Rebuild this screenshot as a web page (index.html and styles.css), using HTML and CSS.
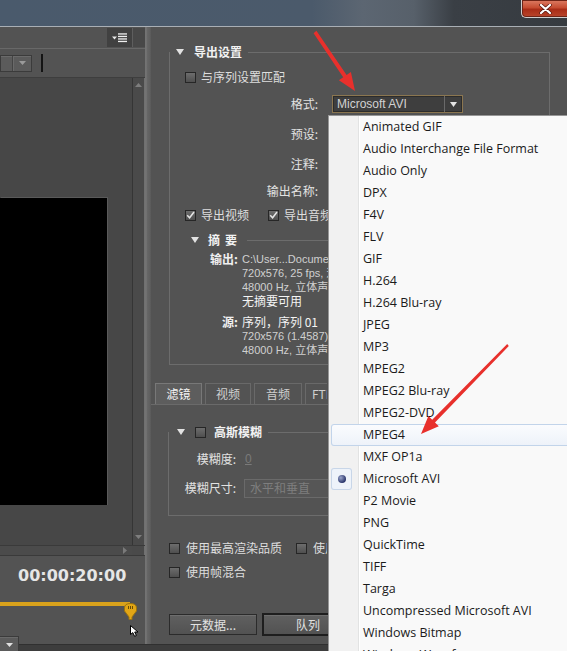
FILE: index.html
```html
<!DOCTYPE html>
<html lang="zh-CN">
<head>
<meta charset="utf-8">
<title>导出设置</title>
<link rel="stylesheet" href="styles.css">
</head>
<body>
<div class="titlebar">
  <div class="close">
    <svg width="13" height="10" viewBox="0 0 13 10"><path d="M2 1L11 9M11 1L2 9" stroke="#5a1a10" stroke-width="3.6" stroke-linecap="round"/><path d="M2 1L11 9M11 1L2 9" stroke="#fff" stroke-width="2.2" stroke-linecap="round"/></svg>
  </div>
</div>

<div class="window">
  <div class="left">
    <div class="lp-head">
      <div class="menu-btn">
        <span class="menu-ico">
          <svg width="16" height="10" viewBox="0 0 16 10"><path d="M0 3.5H5L2.5 6.5Z" fill="#e8e8e8"/><rect x="6" y="0.3" width="9" height="1.3" fill="#f0f0f0"/><rect x="6" y="2.8" width="9" height="1.3" fill="#f0f0f0"/><rect x="6" y="5.3" width="9" height="1.3" fill="#f0f0f0"/><rect x="6" y="7.8" width="9" height="1.3" fill="#f0f0f0"/></svg>
        </span>
        <span class="menu-side"></span>
      </div>
    </div>
    <div class="lp-tool">
      <div class="sel">
        <span class="sel-txt"></span>
        <span class="sel-arr"><svg width="7" height="4" viewBox="0 0 7 4"><path d="M0 0H7L3.5 4Z" fill="#9a9a9a"/></svg></span>
      </div>
      <span class="vbar"></span>
    </div>
    <div class="lp-view">
      <div class="monitor"><div class="video"></div></div>
      <div class="vscroll">
        <svg width="7" height="4" viewBox="0 0 7 4"><path d="M0 4H7L3.5 0Z" fill="#7e7e7e"/></svg>
        <svg width="7" height="4" viewBox="0 0 7 4"><path d="M0 0H7L3.5 4Z" fill="#7e7e7e"/></svg>
      </div>
    </div>
    <div class="hscroll">
      <div class="hs-track"><svg width="4" height="7" viewBox="0 0 4 7"><path d="M0 0V7L4 3.5Z" fill="#7a7a7a"/></svg></div>
      <div class="corner"></div>
    </div>
    <div class="lp-time">
      <div class="timecode">00:00:20:00</div>
      <div class="track">
        <div class="bar"></div>
        <svg class="playhead" width="13" height="17" viewBox="0 0 13 17"><path d="M0.5 5Q0.5 0.5 6.5 0.5Q12.5 0.5 12.5 5V8L8 14V16.5H5V14L0.5 8Z" fill="#e2a615" stroke="#9c7410"/><path d="M4.5 3v3M6.5 3v3M8.5 3v3" stroke="#6b4c05"/></svg>
        <svg class="cursor" width="10" height="12" viewBox="0 0 10 12"><path d="M0.5 0.5V9.5L2.8 7.6L4.6 11.3L6.4 10.5L4.7 7H8Z" fill="#fff" stroke="#000"/></svg>
      </div>
      <div class="sel small">
        <span class="sel-arr"><svg width="7" height="4" viewBox="0 0 7 4"><path d="M0 0H7L3.5 4Z" fill="#e0e0e0"/></svg></span>
      </div>
    </div>
  </div>

  <div class="divider"></div>

  <div class="right">
    <div class="settings">
      <div class="group g1">
        <div class="g-head"><span class="tri"></span><span class="g-title">导出设置</span><span class="g-line"></span></div>
        <div class="row r-match"><span class="cb"></span><span class="cb-label">与序列设置匹配</span></div>
        <div class="frow r-format">
          <span class="flabel">格式:</span>
          <div class="fsel"><span class="fsel-txt">Microsoft AVI</span><span class="fsel-arr"><svg width="7" height="5" viewBox="0 0 7 5"><path d="M0 0H7L3.5 5Z" fill="#e4e4e4"/></svg></span></div>
        </div>
        <div class="frow r-preset"><span class="flabel">预设:</span></div>
        <div class="frow r-note"><span class="flabel">注释:</span></div>
        <div class="frow r-name"><span class="flabel">输出名称:</span></div>
        <div class="row r-checks">
          <span class="cb on"><svg width="9" height="9" viewBox="0 0 9 9"><path d="M1.2 4.2L3.6 6.8L8 1" fill="none" stroke="#e6e6e6" stroke-width="1.5"/></svg></span><span class="cb-label">导出视频</span>
          <span class="cb on cb2"><svg width="9" height="9" viewBox="0 0 9 9"><path d="M1.2 4.2L3.6 6.8L8 1" fill="none" stroke="#e6e6e6" stroke-width="1.5"/></svg></span><span class="cb-label clip">导出音频</span>
        </div>
        <div class="sub-head"><span class="tri"></span><span class="s-title">摘要</span><span class="g-line s-line"></span></div>
        <div class="summary">
          <span class="sl">输出:</span><span class="sv">C:\User...Documents\序列 01.avi</span>
          <span></span><span class="sv">720x576, 25 fps, 逐行, 00:00:20:00</span>
          <span></span><span class="sv">48000 Hz, 立体声, 16 位</span>
          <span></span><span class="sv w">无摘要可用</span>
          <span class="gap"></span>
          <span class="sl">源:</span><span class="sv w">序列，序列 01</span>
          <span></span><span class="sv">720x576 (1.4587), 25 fps, 逐行</span>
          <span></span><span class="sv">48000 Hz, 立体声</span>
        </div>
      </div>
    </div>

    <div class="tabs">
      <span class="tab act t1">滤镜</span>
      <span class="tab t2">视频</span>
      <span class="tab t3">音频</span>
      <span class="tab t4">FTP</span>
    </div>
    <div class="tab-body">
      <div class="group g2">
        <div class="g-head"><span class="tri"></span><span class="cb"></span><span class="g-title">高斯模糊</span><span class="g-line"></span></div>
        <div class="brow r-blur"><span class="flabel">模糊度:</span><span class="zero">0</span></div>
        <div class="brow r-size"><span class="flabel">模糊尺寸:</span><span class="bsel">水平和垂直</span></div>
      </div>
    </div>

    <div class="bottom-opts">
      <div class="orow"><span class="cb"></span><span class="cb-label l6">使用最高渲染品质</span><span class="cb cb-gap"></span><span class="cb-label l6 clip2">使用预览</span></div>
      <div class="orow"><span class="cb"></span><span class="cb-label l6">使用帧混合</span></div>
    </div>
    <div class="buttons">
      <span class="btn b1">元数据...</span>
      <span class="btn b2"><span class="b2-in">队列</span></span>
    </div>
  </div>
</div>
<div class="bottomstrip"></div>

<div class="menu">
  <div class="mi"><span class="mark"></span><span class="t">Animated GIF</span></div>
  <div class="mi"><span class="mark"></span><span class="t">Audio Interchange File Format</span></div>
  <div class="mi"><span class="mark"></span><span class="t">Audio Only</span></div>
  <div class="mi"><span class="mark"></span><span class="t">DPX</span></div>
  <div class="mi"><span class="mark"></span><span class="t">F4V</span></div>
  <div class="mi"><span class="mark"></span><span class="t">FLV</span></div>
  <div class="mi"><span class="mark"></span><span class="t">GIF</span></div>
  <div class="mi"><span class="mark"></span><span class="t">H.264</span></div>
  <div class="mi"><span class="mark"></span><span class="t">H.264 Blu-ray</span></div>
  <div class="mi"><span class="mark"></span><span class="t">JPEG</span></div>
  <div class="mi"><span class="mark"></span><span class="t">MP3</span></div>
  <div class="mi"><span class="mark"></span><span class="t">MPEG2</span></div>
  <div class="mi"><span class="mark"></span><span class="t">MPEG2 Blu-ray</span></div>
  <div class="mi"><span class="mark"></span><span class="t">MPEG2-DVD</span></div>
  <div class="mi hl"><span class="mark"></span><span class="t">MPEG4</span></div>
  <div class="mi"><span class="mark"></span><span class="t">MXF OP1a</span></div>
  <div class="mi"><span class="mark radio"><span class="dot"></span></span><span class="t">Microsoft AVI</span></div>
  <div class="mi"><span class="mark"></span><span class="t">P2 Movie</span></div>
  <div class="mi"><span class="mark"></span><span class="t">PNG</span></div>
  <div class="mi"><span class="mark"></span><span class="t">QuickTime</span></div>
  <div class="mi"><span class="mark"></span><span class="t">TIFF</span></div>
  <div class="mi"><span class="mark"></span><span class="t">Targa</span></div>
  <div class="mi"><span class="mark"></span><span class="t">Uncompressed Microsoft AVI</span></div>
  <div class="mi"><span class="mark"></span><span class="t">Windows Bitmap</span></div>
  <div class="mi"><span class="mark"></span><span class="t">Windows Waveform</span></div>
</div>

<svg class="arrows" width="567" height="651" viewBox="0 0 567 651">
  <polygon points="313.6,33.2 343.2,77.2 338.9,80.2 355,91 350.9,72 346.6,75 316.4,30.8" fill="#e8302c"/>
  <polygon points="507.2,344.0 432.2,419.7 428.4,416.0 421,434 438.8,426.2 435.0,422.5 508.8,346.0" fill="#e8302c"/>
</svg>
</body>
</html>
```

FILE: styles.css
```css
* { box-sizing: border-box; }
html, body { margin: 0; padding: 0; }
body {
  width: 567px;
  height: 651px;
  overflow: hidden;
  position: relative;
  background: #535353;
  font-family: "Noto Sans CJK SC", sans-serif;
  font-size: 12px;
  line-height: 14px;
  color: #dedede;
}

/* title bar */
.titlebar {
  height: 27px;
  border-bottom: 1px solid #a9afb5;
  background: linear-gradient(90deg, #4a5a6c 0%, #4b5a6b 55%, #5c6672 64%, #57606a 73%, #3a3f45 80%, #363b40 100%);
  display: flex;
  justify-content: flex-end;
}
.close {
  width: 47px;
  height: 18px;
  margin-right: -1px;
  border: 1px solid #cfcfcf;
  border-top: 0;
  border-right: 0;
  border-radius: 0 0 0 5px;
  background: linear-gradient(#dd7d64, #c64c31 45%, #a92d17 55%, #b9462c);
  box-shadow: inset 0 0 0 1px #6e2416;
  display: flex;
  align-items: center;
  justify-content: center;
}

.window { display: flex; height: 617px; }

/* left panel */
.left { width: 145px; flex: none; display: flex; flex-direction: column; }
.left > * { flex-shrink: 0; }
.lp-head {
  height: 22px;
  padding-top: 1px;
  border-bottom: 1px solid #686868;
  display: flex;
  justify-content: flex-end;
}
.menu-btn { width: 38px; height: 19px; background: #414141; display: flex; }
.menu-ico {
  width: 26px;
  display: flex;
  align-items: center;
  justify-content: center;
  border-right: 1px solid #5e5e5e;
}
.menu-side { flex: 1; background: #484848; }

.lp-tool { height: 28px; display: flex; align-items: center; }
.sel {
  width: 32px;
  height: 17px;
  border: 1px solid #3b3b3b;
  background: #5b5b5b;
  box-shadow: inset 0 1px 0 #6a6a6a;
  display: flex;
}
.sel-txt { width: 12px; border-right: 1px solid #444; }
.sel-arr {
  flex: 1;
  display: flex;
  align-items: center;
  justify-content: center;
  border-left: 1px solid #6a6a6a;
}
.vbar { width: 2px; height: 18px; background: #141414; margin-left: 9px; }

.lp-view { height: 468px; display: flex; border-top: 1px solid #3e3e3e; }
.monitor { flex: 1; background: #474747; padding-top: 120px; }
.video {
  width: 107px;
  height: 307px;
  background: #000;
  box-shadow: 1px 0 0 #5a5a5a, 1px -1px 0 #5a5a5a;
}
.vscroll {
  width: 13px;
  background: #4a4a4a;
  border-left: 1px solid #353535;
  border-right: 1px solid #707070;
  display: flex;
  flex-direction: column;
  justify-content: space-between;
  align-items: center;
  padding: 5px 0 6px;
}
.hscroll {
  height: 11px;
  display: flex;
  border-top: 1px solid #3a3a3a;
  border-bottom: 1px solid #3a3a3a;
}
.hs-track {
  width: 132px;
  background: #4b4b4b;
  display: flex;
  justify-content: flex-end;
  align-items: center;
  padding-right: 5px;
}
.corner { flex: 1; background: #4a4a4a; border-right: 1px solid #707070; }

.lp-time { flex: 1; padding-top: 11px; }
.timecode {
  padding-left: 18px;
  font: bold 16px/18px "DejaVu Sans", sans-serif;
  color: #e6e6e6;
}
.track { position: relative; height: 30px; margin-top: 3px; }
.bar { width: 130px; height: 4px; margin-top: 17px; background: #d9a21c; }
.playhead { position: absolute; left: 124px; top: 1px; }
.cursor { position: absolute; left: 130px; top: 23px; }
.sel.small { width: 19px; height: 17px; margin-top: 4px; border-left: 0; }
.sel.small .sel-arr { border-left: 0; }

.divider {
  width: 6px;
  flex: none;
  background: linear-gradient(90deg, #6c6c6c 0, #7a7a7a 1px, #676767 2px, #5f5f5f 5px, #585858 6px);
}

/* right panel */
.right { flex: 1; min-width: 0; overflow: hidden; display: flex; flex-direction: column; }
.right > * { flex-shrink: 0; }
.settings { padding: 25px 17px 0 18px; }
.group { display: flow-root; border: 1px solid #6c6c6c; border-top: 0; }
.g1 { height: 313px; }
.g-head {
  display: flex;
  align-items: center;
  height: 14px;
  margin-top: -7px;
  padding-left: 6px;
  white-space: nowrap;
}
.tri {
  width: 0;
  height: 0;
  border-left: 4px solid transparent;
  border-right: 4px solid transparent;
  border-top: 6px solid #e2e2e2;
  flex: none;
}
.g-title { margin-left: 10px; font-weight: bold; color: #f2f2f2; }
.g-line { flex: 1; height: 0; border-top: 1px solid #6c6c6c; margin-left: 6px; }

.row { display: flex; align-items: center; padding-left: 15px; white-space: nowrap; }
.r-match { margin-top: 7px; height: 22px; }
.cb {
  width: 11px;
  height: 11px;
  flex: none;
  border: 1px solid #262626;
  background: linear-gradient(#6d6d6d, #4f4f4f);
  display: flex;
  align-items: center;
  justify-content: center;
}
.cb-label { margin-left: 5px; }
.l6 { margin-left: 6px; }
.cb2 { margin-left: 19px; }
.clip { width: 45px; overflow: hidden; flex: none; }
.clip2 { width: 14px; overflow: hidden; flex: none; }

.frow {
  display: grid;
  grid-template-columns: 148px auto;
  column-gap: 14px;
  align-items: center;
  white-space: nowrap;
}
.flabel { text-align: right; color: #e2e2e2; }
.r-format { height: 32px; }
.r-preset { height: 28px; }
.r-note { height: 32px; }
.r-name { height: 22px; }
.r-checks { height: 26px; }

.fsel {
  width: 131px;
  height: 18px;
  border: 1px solid #8b7650;
  background: #3e3e3e;
  box-shadow: inset 0 0 0 1px #2c2c2c;
  display: flex;
  align-items: center;
}
.fsel-txt {
  flex: 1;
  padding-left: 4px;
  font: 12px/16px "Liberation Sans", sans-serif;
  color: #d2d2d2;
}
.fsel-arr {
  width: 18px;
  height: 100%;
  border-left: 1px solid #6a6a6a;
  display: flex;
  align-items: center;
  justify-content: center;
}

.sub-head {
  display: flex;
  align-items: center;
  height: 24px;
  padding-left: 21px;
  white-space: nowrap;
}
.s-title { margin-left: 9px; font-weight: bold; color: #f2f2f2; letter-spacing: 5px; }
.s-line { margin-left: 5px; margin-right: 0; }

.summary {
  display: grid;
  grid-template-columns: 68px 86px;
  column-gap: 4px;
  line-height: 14px;
  white-space: nowrap;
}
.sl { text-align: right; font-weight: bold; color: #f0f0f0; }
.sv { font-family: "Liberation Sans", "Noto Sans CJK SC", sans-serif; font-size: 11px; color: #d0d0d0; overflow: hidden; }
.sv.w { font-family: "Noto Sans CJK SC", sans-serif; font-size: 12px; color: #f4f4f4; }
.gap { grid-column: 1 / span 2; height: 7px; }

.tabs { display: flex; gap: 3px; padding-left: 4px; margin-top: 18px; height: 21px; }
.tab {
  height: 21px;
  border: 1px solid #696969;
  border-bottom: 0;
  display: flex;
  align-items: center;
  justify-content: center;
  color: #cfcfcf;
  white-space: nowrap;
  overflow: hidden;
  flex: none;
}
.tab.act { background: #5d5d5d; color: #f4f4f4; border-color: #787878; }
.t1 { width: 47px; }
.t2 { width: 46px; }
.t3 { width: 48px; }
.t4 { width: 22px; justify-content: flex-start; padding-left: 6px; border-right: 0; }

.tab-body { border-top: 1px solid #6a6a6a; padding: 0 17px 0 17px; }
.g2 { margin-top: 27px; height: 84px; }
.g2 .g-head { padding-left: 8px; }
.g2 .g-head .cb { margin-left: 10px; }
.g2 .g-title { margin-left: 8px; }
.brow {
  display: grid;
  grid-template-columns: 67px auto;
  column-gap: 8px;
  align-items: center;
  height: 20px;
  white-space: nowrap;
}
.r-blur { margin-top: 10px; }
.r-size { margin-top: 9px; }
.zero {
  color: #7a7a7a;
  text-decoration: underline;
  font-family: "Liberation Sans", sans-serif;
  padding-left: 1px;
}
.bsel {
  width: 100px;
  height: 19px;
  border: 1px solid #6a6a6a;
  background: #565656;
  color: #7e7e7e;
  padding-left: 5px;
  display: flex;
  align-items: center;
}

.bottom-opts {
  margin-top: 21px;
  padding-left: 18px;
  display: flex;
  flex-direction: column;
  gap: 2px;
}
.orow { height: 22px; display: flex; align-items: center; white-space: nowrap; }
.cb-gap { margin-left: 14px; }

.buttons { margin-top: 30px; padding-left: 18px; display: flex; align-items: center; white-space: nowrap; }
.btn {
  height: 21px;
  border: 1px solid #2b2b2b;
  background: linear-gradient(#606060, #525252);
  box-shadow: inset 0 1px 0 #6e6e6e;
  display: flex;
  align-items: center;
  justify-content: center;
  color: #e2e2e2;
  flex: none;
}
.b1 { width: 88px; }
.b2 { width: 90px; height: 23px; margin-left: 5px; border: 2px solid #1e1e1e; justify-content: flex-start; padding-left: 32px; }

.bottomstrip { height: 7px; background: #3d3d3d; border-top: 1px solid #303030; }

/* drop-down list */
.menu {
  position: absolute;
  left: 328px;
  top: 115px;
  width: 245px;
  height: 545px;
  border: 1px solid #979797;
  background: linear-gradient(90deg, #f1f1f1 0, #f1f1f1 29px, #e2e3e3 29px, #e2e3e3 30px, #ffffff 30px, #ffffff 31px, #f9f9f9 31px);
  box-shadow: 2px 2px 3px rgba(0, 0, 0, 0.3);
  font-family: "Open Sans", sans-serif;
  font-size: 12.5px;
  color: #1b1b1b;
  overflow: hidden;
}
.mi {
  height: 22px;
  margin-left: 2px;
  display: flex;
  align-items: center;
  white-space: nowrap;
  border-radius: 3px;
}
.mark { width: 21px; height: 22px; flex: none; }
.t { margin-left: 11px; }
.mi.hl {
  background: linear-gradient(#fbfcfe, #edf2f9);
  box-shadow: inset 0 0 0 1px #c2d4ea;
}
.mark.radio {
  border-radius: 3px;
  background: #eef3fa;
  box-shadow: inset 0 0 0 1px #c8d6e8;
  display: flex;
  align-items: center;
  justify-content: center;
}
.dot {
  width: 8px;
  height: 8px;
  border-radius: 50%;
  background: radial-gradient(circle at 35% 35%, #9aa6cc, #2a356c 70%);
}

.arrows { position: absolute; left: 0; top: 0; pointer-events: none; }
```
